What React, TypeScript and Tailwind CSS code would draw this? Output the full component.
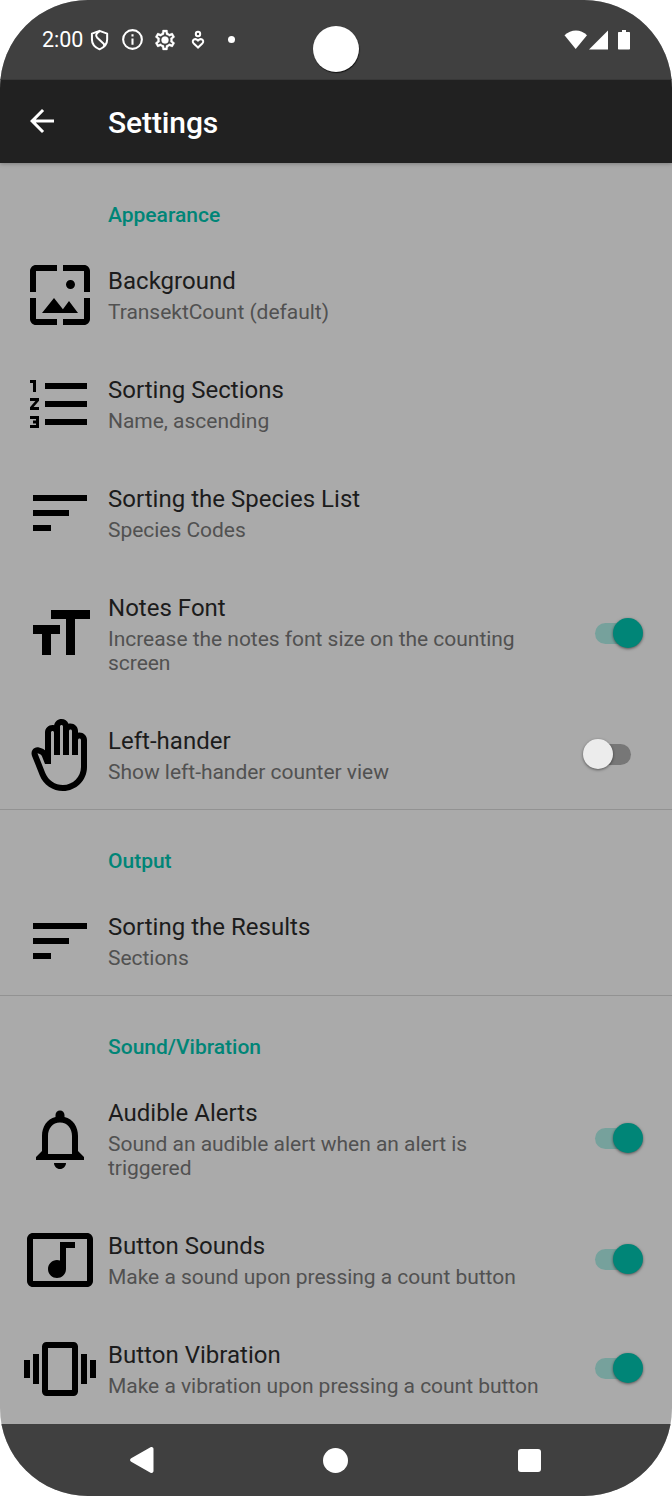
import React from "react";

const PATHS = {
  wallpaper:
    "M4 4h7V2H4c-1.1 0-2 .9-2 2v7h2V4zm6 9l-4 5h12l-3-4-2.03 2.71L10 13zm7-4.5c0-.83-.67-1.5-1.5-1.5S14 7.67 14 8.5s.67 1.5 1.5 1.5S17 9.33 17 8.5zM20 2h-7v2h7v7h2V4c0-1.1-.9-2-2-2zm0 18h-7v2h7c1.1 0 2-.9 2-2v-7h-2v7zM4 13H2v7c0 1.1.9 2 2 2h7v-2H4v-7z",
  numbered:
    "M2 17h2v.5H3v1h1v.5H2v1h3v-4H2v1zm1-9h1V4H2v1h1v3zm-1 3h1.8L2 13.1v.9h3v-1H3.2L5 10.9V10H2v1zm5-6v2h14V5H7zm0 14h14v-2H7v2zm0-6h14v-2H7v2z",
  sort: "M3 18h6v-2H3v2zM3 6v2h18V6H3zm0 7h12v-2H3v2z",
  size: "M9 4v3h5v12h3V7h5V4H9zm-6 8h3v7h3v-7h3V9H3v3z",
  hand: "M21 7c0-1.38-1.12-2.5-2.5-2.5-.17 0-.34.02-.5.05V4c0-1.38-1.12-2.5-2.5-2.5-.23 0-.46.03-.67.09C14.46.66 13.56 0 12.5 0c-1.23 0-2.25.89-2.46 2.06C9.87 2.02 9.69 2 9.5 2 8.12 2 7 3.12 7 4.5v5.89c-.34-.31-.76-.54-1.22-.66L5.01 9.52c-.83-.23-1.7.09-2.19.83-.38.57-.4 1.31-.15 1.95l2.56 6.43C6.49 21.91 9.57 24 13 24c4.42 0 8-3.58 8-8V7zm-2 9c0 3.31-2.69 6-6 6-2.61 0-4.95-1.59-5.91-4.01l-2.6-6.54.53.14c.46.12.83.46 1 .9L7 15h2V4.5c0-.28.22-.5.5-.5s.5.22.5.5V12h2V2.5c0-.28.22-.5.5-.5s.5.22.5.5V12h2V4c0-.28.22-.5.5-.5s.5.22.5.5v8h2V7c0-.28.22-.5.5-.5s.5.22.5.5v9z",
  bell: "M12 22c1.1 0 2-.9 2-2h-4c0 1.1.9 2 2 2zm6-6v-5c0-3.07-1.63-5.64-4.5-6.32V4c0-.83-.67-1.5-1.5-1.5s-1.5.67-1.5 1.5v.68C7.64 5.36 6 7.92 6 11v5l-2 2v1h16v-1l-2-2zm-2 1H8v-6c0-2.48 1.51-4.5 4-4.5s4 2.02 4 4.5v6z",
  music:
    "M21 3H3c-1.1 0-2 .9-2 2v14c0 1.1.9 2 2 2h18c1.1 0 2-.9 2-2V5c0-1.1-.9-2-2-2zm0 16H3V5h18v14zM8 15c0-1.66 1.34-3 3-3 .35 0 .69.07 1 .18V6h5v2h-3v7.03c-.02 1.64-1.35 2.97-3 2.97-1.66 0-3-1.34-3-3z",
  vibration:
    "M0 15h2V9H0v6zm3 2h2V7H3v10zm19-8v6h2V9h-2zm-3 8h2V7h-2v10zM16.5 3h-9C6.67 3 6 3.67 6 4.5v15c0 .83.67 1.5 1.5 1.5h9c.83 0 1.5-.67 1.5-1.5v-15c0-.83-.67-1.5-1.5-1.5zM16 19H8V5h8v14z",
  gear: "M19.43 12.98c.04-.32.07-.64.07-.98 0-.34-.03-.66-.07-.98l2.11-1.65c.19-.15.24-.42.12-.64l-2-3.46c-.09-.16-.26-.25-.44-.25-.06 0-.12.01-.17.03l-2.49 1c-.52-.4-1.08-.73-1.69-.98l-.38-2.65C14.46 2.18 14.25 2 14 2h-4c-.25 0-.46.18-.49.42l-.38 2.65c-.61.25-1.17.59-1.69.98l-2.49-1c-.06-.02-.12-.03-.18-.03-.17 0-.34.09-.43.25l-2 3.46c-.13.22-.07.49.12.64l2.11 1.65c-.04.32-.07.65-.07.98 0 .33.03.66.07.98l-2.11 1.65c-.19.15-.24.42-.12.64l2 3.46c.09.16.26.25.44.25.06 0 .12-.01.17-.03l2.49-1c.52.4 1.08.73 1.69.98l.38 2.65c.03.24.24.42.49.42h4c.25 0 .46-.18.49-.42l.38-2.65c.61-.25 1.17-.59 1.69-.98l2.49 1c.06.02.12.03.18.03.17 0 .34-.09.43-.25l2-3.46c.12-.22.07-.49-.12-.64l-2.11-1.65zm-1.98-1.71c.04.31.05.52.05.73 0 .21-.02.43-.05.73l-.14 1.13.89.7 1.08.84-.7 1.21-1.27-.51-1.04-.42-.9.68c-.43.32-.84.56-1.25.73l-1.06.43-.16 1.13-.2 1.35h-1.4l-.19-1.35-.16-1.13-1.06-.43c-.43-.18-.83-.41-1.23-.71l-.91-.7-1.06.43-1.27.51-.7-1.21 1.08-.84.89-.7-.14-1.13c-.03-.31-.05-.54-.05-.74s.02-.43.05-.73l.14-1.13-.89-.7-1.08-.84.7-1.21 1.27.51 1.04.42.9-.68c.43-.32.84-.56 1.25-.73l1.06-.43.16-1.13.2-1.35h1.39l.19 1.35.16 1.13 1.06.43c.43.18.83.41 1.23.71l.91.7 1.06-.43 1.27-.51.7 1.21-1.07.85-.89.7.14 1.13z",
};

type IconName = keyof typeof PATHS;

function Switch({ on }: { on: boolean }) {
  return (
    <div className="relative h-[31px] w-[60px] shrink-0">
      <div
        className={
          on
            ? "absolute left-[12px] top-[5px] h-[21px] w-[36px] rounded-full bg-[#76a19c]"
            : "absolute left-[12px] top-[5px] h-[21px] w-[36px] rounded-full bg-[#777777]"
        }
      />
      <div
        className={
          on
            ? "absolute left-[30px] top-0 size-[30px] rounded-full bg-[#008577] shadow-[0_1px_3px_rgba(0,0,0,0.5)]"
            : "absolute left-0 top-0 size-[30px] rounded-full bg-[#ececec] shadow-[0_1px_3px_rgba(0,0,0,0.5)]"
        }
      />
    </div>
  );
}

function Row({
  icon,
  title,
  lines,
  on,
}: {
  icon: IconName;
  title: string;
  lines: string[];
  on?: boolean;
}) {
  return (
    <div
      className={
        lines.length > 1
          ? "flex h-[133px] items-center pl-6 pr-[29px]"
          : "flex h-[109px] items-center pl-6 pr-[29px]"
      }
    >
      <svg viewBox="0 0 24 24" className="size-[72px] shrink-0 fill-black">
        <path d={PATHS[icon]} />
      </svg>
      <div className="ml-3 flex-1 whitespace-nowrap">
        <div className="text-[24px] leading-[32px] tracking-[0.02px] text-[#1c1c1c]">{title}</div>
        <div className="mt-[3px] text-[21px] leading-[24.5px] tracking-[-0.03px] text-[#515151]">
          {lines.map((line) => (
            <div key={line}>{line}</div>
          ))}
        </div>
      </div>
      {on !== undefined && <Switch on={on} />}
    </div>
  );
}

function Category({ label }: { label: string }) {
  return (
    <h2 className="flex h-[76px] items-end pb-[12.5px] pl-[108px] text-[21px] font-medium leading-[25px] text-[#008577]">
      {label}
    </h2>
  );
}

function StatusBar() {
  return (
    <div className="relative flex h-[80px] shrink-0 items-center border-b border-[#383838] bg-[#404040] pl-[42px] text-white">
      <span className="w-[47px] pt-px text-[21.5px] leading-none">2:00</span>
      <svg viewBox="0 0 24 24" className="size-[22px]" fill="none" stroke="currentColor" strokeWidth="2.2" strokeLinejoin="round">
        <path d="M11.500 2l8.300 3v6.500c0 5-3.400 8.700-8.300 10.700-4.900-2-8.300-5.700-8.300-10.700V5z" />
        <path d="M11.500 2.500C8 4.500 6.500 7 9 9.500l7 6.500c1.200 1.200.8 2.300 0 3.200" />
      </svg>
      <svg viewBox="0 0 24 24" className="ml-[9px] size-[25px] fill-white">
        <path d="M11 7h2v2h-2zm0 4h2v6h-2zm1-9a10 10 0 1 0 0 20 10 10 0 0 0 0-20zm0 18a8 8 0 1 1 0-16 8 8 0 0 1 0 16z" />
      </svg>
      <svg viewBox="0 0 24 24" className="ml-2 size-[24px] fill-white stroke-white" strokeWidth="0.3">
        <path d={PATHS.gear} />
        <circle cx="12" cy="12" r="3.500" />
      </svg>
      <svg viewBox="0 0 24 24" className="ml-[9px] size-[24px]" fill="none" stroke="currentColor" strokeWidth="2">
        <circle cx="12" cy="6" r="2.200" />
        <path d="M12 19.500l-4.500-4.300c-2.300-2.900 1.500-5.700 4.500-2.700 3-3 6.800-.2 4.500 2.700z" />
      </svg>
      <div className="ml-[18px] size-[7px] rounded-full bg-white" />
      <div className="absolute left-[313px] top-[26px] size-[46px] rounded-full bg-white shadow-[0.5px_1px_1px_#111]" />
      <svg viewBox="0 0 68 20" className="ml-auto mr-[40px] h-[20px] w-[68px] fill-white">
        <path d="M0.500 5.300C7-1 17-1 23 5.300L11.700 19z" />
        <path d="M25 19.500L44 .5v19z" />
        <path d="M58 0h4v2h3c.8 0 1 .5 1 1v15.500c0 .7-.5 1-1 1H55c-.7 0-1-.5-1-1V3c0-.6.4-1 1-1h3z" />
      </svg>
    </div>
  );
}

export default function App() {
  return (
    <div className="h-[1496px] w-[672px] bg-white font-['Roboto',sans-serif]">
      <div className="flex h-full flex-col overflow-hidden rounded-[88px] bg-[#aaaaaa]">
        <StatusBar />
        <header className="flex h-[83px] shrink-0 items-center bg-[#212121] text-white shadow-[0_1px_4px_rgba(0,0,0,0.25)]">
          <svg viewBox="0 0 24 24" className="mb-px ml-6 size-[36px] fill-white">
            <path d="M20 11H7.830l5.590-5.590L12 4l-8 8 8 8 1.410-1.410L7.830 13H20v-2z" />
          </svg>
          <h1 className="ml-12 pt-[2px] text-[30px] font-medium leading-[36px] tracking-[-0.1px]">Settings</h1>
        </header>
        <main className="flex-1 pt-px">
          <section>
            <Category label="Appearance" />
            <Row icon="wallpaper" title="Background" lines={["TransektCount (default)"]} />
            <Row icon="numbered" title="Sorting Sections" lines={["Name, ascending"]} />
            <Row icon="sort" title="Sorting the Species List" lines={["Species Codes"]} />
            <Row
              icon="size"
              title="Notes Font"
              lines={["Increase the notes font size on the counting", "screen"]}
              on={true}
            />
            <Row icon="hand" title="Left-hander" lines={["Show left-hander counter view"]} on={false} />
          </section>
          <section className="border-t border-[#929292]">
            <Category label="Output" />
            <Row icon="sort" title="Sorting the Results" lines={["Sections"]} />
          </section>
          <section className="border-t border-[#929292]">
            <Category label="Sound/Vibration" />
            <Row
              icon="bell"
              title="Audible Alerts"
              lines={["Sound an audible alert when an alert is", "triggered"]}
              on={true}
            />
            <Row icon="music" title="Button Sounds" lines={["Make a sound upon pressing a count button"]} on={true} />
            <Row
              icon="vibration"
              title="Button Vibration"
              lines={["Make a vibration upon pressing a count button"]}
              on={true}
            />
          </section>
        </main>
        <nav className="flex h-[72px] shrink-0 items-center bg-[#404040]">
          <svg viewBox="0 0 24 26" className="ml-[130px] h-[26px] w-[24px] fill-white">
            <path d="M1.200 11.200L20.500.3C22 -.3 23.500.5 23.500 2v22c0 1.500-1.500 2.300-3 1.700L1.200 14.800c-1.500-1-1.500-2.600 0-3.600z" />
          </svg>
          <div className="ml-[169px] size-[25px] rounded-full bg-white" />
          <div className="ml-[170px] size-[23px] rounded-[3px] bg-white" />
        </nav>
      </div>
    </div>
  );
}
